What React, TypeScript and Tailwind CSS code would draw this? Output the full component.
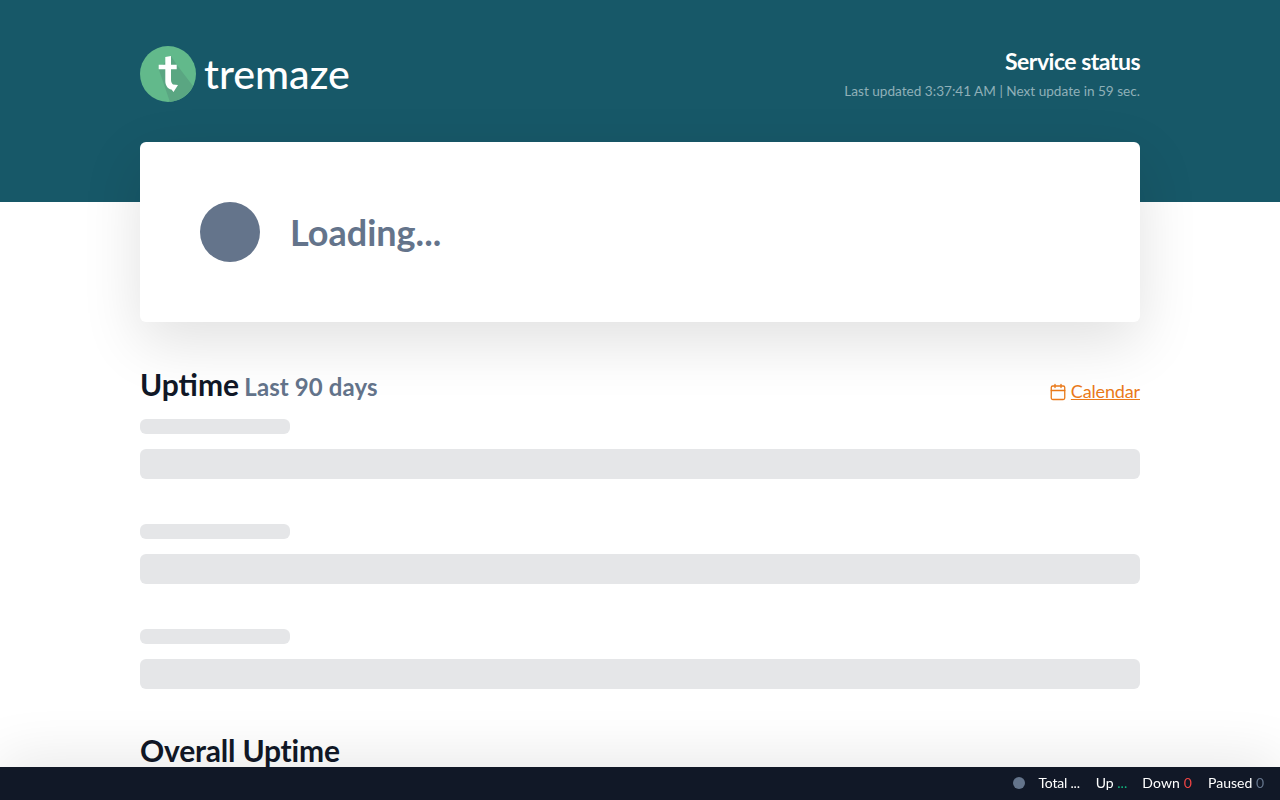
import React from 'react';
import { Calendar } from 'lucide-react';

const font = "font-['Lato','Noto_Sans',sans-serif]";

const Logo = () => (
  <svg width="56" height="56" viewBox="0 0 56 56">
    <circle cx="28" cy="28" r="28" fill="#62b98b" />
    <path d="M31 10 L36.7 18.7 L53 40 A28 28 0 0 1 30 56 L18.7 23.3 Z" fill="#5aa682" />
    <path d="M25.3 11 L31 10 V18.7 H36.7 V23.3 H31 V34 C31 36 32 37.5 33 38.5 L38 39 L33.5 46 L31.5 43.5 C27.5 43 25.3 39 25.3 35 V23.3 H18.7 V18.7 H25.3 Z" fill="#ffffff" />
  </svg>
);

const SkeletonRow = () => (
  <div className="flex flex-col gap-[15px]">
    <div className="h-[15px] w-[150px] rounded-md bg-[#e5e6e8]" />
    <div className="h-[30px] w-full rounded-md bg-[#e5e6e8]" />
  </div>
);

const Stat = ({ label, value, color, className }: { label: string; value: string; color: string; className?: string }) => (
  <span className={className}>
    {label} <span className={color}>{value}</span>
  </span>
);

export default function App() {
  return (
    <div className={`relative h-screen overflow-hidden bg-white ${font}`}>
      <header className="h-[202px] bg-[#175868]">
        <div className="mx-auto flex w-[1000px] items-start justify-between pt-[46px]">
          <div className="flex items-center gap-[8px]">
            <Logo />
            <span className="-mt-[2px] text-[41.2px] leading-[56px] font-medium text-white">tremaze</span>
          </div>
          <div className="text-right">
            <h1 className="mt-[1px] text-[23px] leading-[28px] font-bold tracking-[-0.5px] text-white">Service status</h1>
            <p className="mt-[6px] text-[13.6px] leading-5 text-[#8fb0b8]">Last updated 3:37:41 AM | Next update in 59 sec.</p>
          </div>
        </div>
      </header>

      <main className="mx-auto -mt-[60px] w-[1000px]">
        <section className="relative flex h-[180px] items-center gap-[30px] rounded-md bg-white px-[60px] shadow-[0_20px_60px_rgba(0,0,0,0.12)]">
          <div className="h-[60px] w-[60px] rounded-full bg-[#64748b]" />
          <h2 className="text-4xl font-bold text-[#64748b]">Loading...</h2>
        </section>

        <div className="mt-[44px] flex items-end justify-between">
          <h2 className="text-3xl leading-[36px] font-bold text-[#111827]">
            Uptime <span className="-ml-[2px] text-2xl tracking-[0.1px] text-[#64748b]">Last 90 days</span>
          </h2>
          <a className="-mb-[2px] flex items-center gap-[4px] text-lg leading-7 tracking-[-0.15px] text-[#ea7a1a] underline" href="#">
            <Calendar size={18} strokeWidth={1.75} className="mt-[1px]" />
            Calendar
          </a>
        </div>

        <div className="mt-[16px] flex flex-col gap-[45px]">
          <SkeletonRow />
          <SkeletonRow />
          <SkeletonRow />
        </div>

        <h2 className="mt-[43px] text-3xl leading-[36px] font-bold tracking-[-0.2px] text-[#111827]">Overall Uptime</h2>
      </main>

      <footer className="fixed inset-x-0 bottom-0 flex h-[33px] items-center justify-end gap-4 bg-[#111827] pr-4 pb-px text-sm text-white shadow-[0_0_60px_rgba(0,0,0,0.15)]">
        <div className="h-3 w-3 rounded-full bg-[#64748b]" />
        <Stat label="Total" value="..." color="text-white" className="-ml-[3px] tracking-[-0.2px]" />
        <Stat label="Up" value="..." color="text-[#10b981]" />
        <Stat label="Down" value="0" color="text-[#ef4444]" className="-ml-px tracking-[0.15px]" />
        <Stat label="Paused" value="0" color="text-[#64748b]" />
      </footer>
    </div>
  );
}
